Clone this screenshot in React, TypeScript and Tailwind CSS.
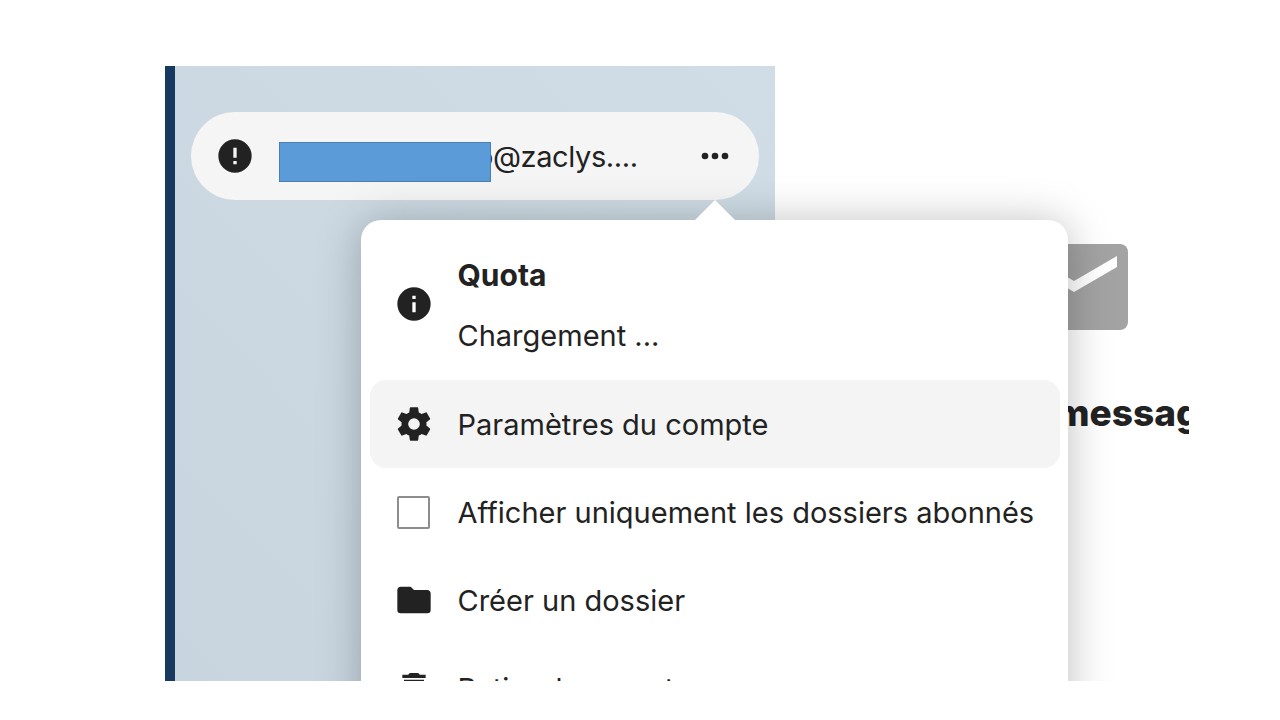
const P = {
  alert: "M13,13H11V7H13M13,17H11V15H13M12,2A10,10 0 0,0 2,12A10,10 0 0,0 12,22A10,10 0 0,0 22,12A10,10 0 0,0 12,2Z",
  info: "M13,9H11V7H13M13,17H11V11H13M12,2A10,10 0 0,0 2,12A10,10 0 0,0 12,22A10,10 0 0,0 22,12A10,10 0 0,0 12,2Z",
  cog: "M12,15.5A3.5,3.5 0 0,1 8.5,12A3.5,3.5 0 0,1 12,8.5A3.5,3.5 0 0,1 15.5,12A3.5,3.5 0 0,1 12,15.5M19.43,12.97C19.47,12.65 19.5,12.33 19.5,12C19.5,11.67 19.47,11.34 19.43,11L21.54,9.37C21.73,9.22 21.78,8.95 21.66,8.73L19.66,5.27C19.54,5.05 19.27,4.96 19.05,5.05L16.56,6.05C16.04,5.66 15.5,5.32 14.87,5.07L14.5,2.42C14.46,2.18 14.25,2 14,2H10C9.75,2 9.54,2.18 9.5,2.42L9.13,5.07C8.5,5.32 7.96,5.66 7.44,6.05L4.95,5.05C4.73,4.96 4.46,5.05 4.34,5.27L2.34,8.73C2.21,8.95 2.27,9.22 2.46,9.37L4.57,11C4.53,11.34 4.5,11.67 4.5,12C4.5,12.33 4.53,12.65 4.57,12.97L2.46,14.63C2.27,14.78 2.21,15.05 2.34,15.27L4.34,18.73C4.46,18.95 4.73,19.03 4.95,18.95L7.44,17.94C7.96,18.34 8.5,18.68 9.13,18.93L9.5,21.58C9.54,21.82 9.75,22 10,22H14C14.25,22 14.46,21.82 14.5,21.58L14.87,18.93C15.5,18.67 16.04,18.34 16.56,17.94L19.05,18.95C19.27,19.03 19.54,18.95 19.66,18.73L21.66,15.27C21.78,15.05 21.73,14.78 21.54,14.63L19.43,12.97Z",
  folder: "M10,4H4C2.89,4 2,4.89 2,6V18A2,2 0 0,0 4,20H20A2,2 0 0,0 22,18V8C22,6.89 21.1,6 20,6H12L10,4Z",
  trash: "M19,4H15.5L14.5,3H9.5L8.5,4H5V6H19M6,19A2,2 0 0,0 8,21H16A2,2 0 0,0 18,19V7H6V19Z",
  dots: "M16,12A2,2 0 0,1 18,10A2,2 0 0,1 20,12A2,2 0 0,1 18,14A2,2 0 0,1 16,12M10,12A2,2 0 0,1 12,10A2,2 0 0,1 14,12A2,2 0 0,1 12,14A2,2 0 0,1 10,12M4,12A2,2 0 0,1 6,10A2,2 0 0,1 8,12A2,2 0 0,1 6,14A2,2 0 0,1 4,12Z",
};

function Icon({ d }: { d: string }) {
  return (
    <svg viewBox="0 0 24 24" className="w-10 h-10 shrink-0 fill-[#222222]">
      <path d={d} />
    </svg>
  );
}

function Row({ icon, label, active }: { icon: React.ReactNode; label: string; active?: boolean }) {
  return (
    <div className={`flex items-center h-[88px] rounded-2xl shrink-0 ${active ? "bg-[#f4f4f4]" : ""}`}>
      <div className="w-[88px] shrink-0 pr-[1px] flex items-center justify-center">{icon}</div>
      <span className="whitespace-nowrap pt-[2px] -ml-[0.5px]">{label}</span>
    </div>
  );
}

export default function App() {
  return (
    <div className="min-h-[720px] bg-white pt-[66px] pl-[165px] font-['Inter',sans-serif] text-[#222222]">
      <div className="relative w-[1024px] h-[615px] overflow-hidden flex">
        <aside className="w-[610px] shrink-0 border-l-[10px] border-[#17395f] bg-gradient-to-tr from-[#c8d5df] to-[#d0dde6] pt-[46px] px-4">
          <div className="relative h-[88px] rounded-[44px] bg-[#f5f5f5] flex items-center pl-6">
            <Icon d={P.alert} />
            <span className="ml-[221px] mt-[2px] text-[29px] tracking-[-0.4px] leading-10 whitespace-nowrap">o@zaclys....</span>
            <div className="absolute left-[88px] top-[30px] w-[212px] h-10 bg-[#5b9bd8] border border-[#4b7fb4]" />
            <div className="ml-auto mr-6">
              <Icon d={P.dots} />
            </div>
          </div>
        </aside>
        <main className="w-[598px] shrink-0 flex flex-col items-center pt-[178px]">
          <svg viewBox="0 0 108 86" className="w-[108px] h-[86px] shrink-0">
            <rect width="108" height="86" rx="8" fill="#a3a3a3" />
            <path d="M11,12 L54,37 L97,12 L97,23 L54,48 L11,23 Z" fill="#ffffff" />
          </svg>
          <h2 className="mt-[60px] text-[37px] leading-[46px] font-extrabold whitespace-nowrap">Aucun message</h2>
        </main>

        <div className="absolute left-[196px] top-[154px] w-[707px] h-[600px] bg-white rounded-[20px] shadow-[0_2px_44px_rgba(0,0,0,0.26)] pl-[9px] pr-2 pt-2 flex flex-col text-[29px] leading-10">
          <div className="absolute left-[334px] top-[-20px] w-0 h-0 border-x-[20px] border-x-transparent border-b-[20px] border-b-white" />
          <div className="flex items-center h-[152px] shrink-0">
            <div className="w-[88px] shrink-0 pr-[1px] flex items-center justify-center">
              <Icon d={P.info} />
            </div>
            <div className="flex flex-col gap-[20px] pt-[2px] -ml-[0.5px]">
              <span className="font-bold text-[30px]">Quota</span>
              <span className="pt-[1px]">Chargement ...</span>
            </div>
          </div>
          <Row icon={<Icon d={P.cog} />} label="Paramètres du compte" active />
          <Row
            icon={<div className="w-[33px] h-[33px] border-2 border-[#8d8d8d] rounded-[2px] bg-white" />}
            label="Afficher uniquement les dossiers abonnés"
          />
          <Row icon={<Icon d={P.folder} />} label="Créer un dossier" />
          <Row icon={<Icon d={P.trash} />} label="Retirer le compte" />
        </div>
      </div>
    </div>
  );
}
